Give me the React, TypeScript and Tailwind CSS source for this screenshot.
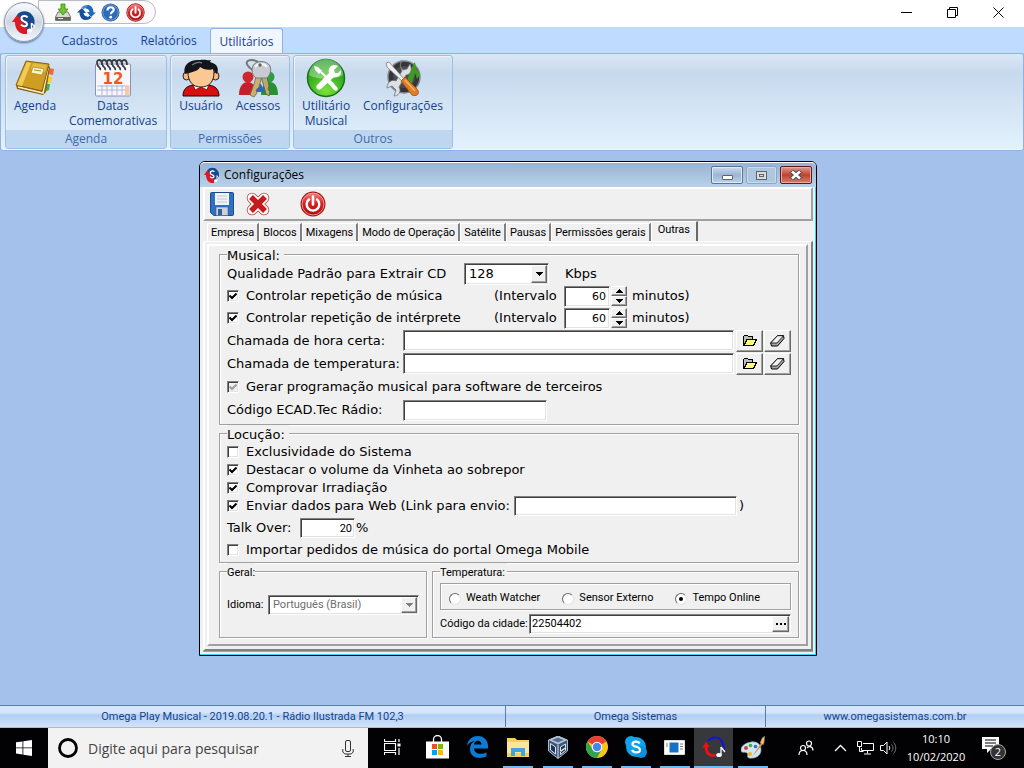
import { useState } from "react";
import type { ReactNode } from "react";

const SUNKEN = "border border-t-[#808080] border-l-[#808080] border-b-white border-r-white shadow-[inset_1px_1px_0_#404040,inset_-1px_-1px_0_#e3e3e3]";
const RAISED = "border border-t-white border-l-white border-b-[#696969] border-r-[#696969] shadow-[inset_-1px_-1px_0_#a0a0a0] bg-[#f0f0f0]";
const GROUP = "min-w-0 border border-[#a0a0a0] shadow-[1px_1px_0_#fff,inset_1px_1px_0_#fff] px-[7px]";
const SMALL = "font-[Roboto,'Liberation_Sans',sans-serif] text-[11px]";

const DIALOG_TABS = ["Empresa", "Blocos", "Mixagens", "Modo de Operação", "Satélite", "Pausas", "Permissões gerais", "Outras"];

/* ---------- Icons ---------- */

function OmegaLogo({ size }: { size: number }) {
  return (
    <svg width={size} height={size} viewBox="0 0 24 24">
      <path d="M5 5C8 0 17 0 20 5c3 3 3 7 2 11l-4 4-6 1-6-7z" fill="#164a8c" />
      <path d="M0 12l5-7 5 6 5 8v5C8 25 3 20 3 12z" fill="#dd1a22" />
      <path d="M15.500 7.500C14 5 9 5.500 9.500 9s5.500 2 5.500 5-4 3-6 .5" fill="none" stroke="#fff" strokeWidth="2" />
      <path d="M19.500 13v7" stroke="#fff" strokeWidth="1.500" />
      <path d="M19.500 13c1 2 3 2 3 4.500" fill="none" stroke="#fff" strokeWidth="1.300" />
      <ellipse cx="17.500" cy="20.500" rx="2.500" ry="2" fill="#fff" />
    </svg>
  );
}

function PowerIcon({ size }: { size: number }) {
  return (
    <svg width={size} height={size} viewBox="0 0 26 26">
      <defs>
        <linearGradient id="pw" x1="0" y1="0" x2="0" y2="1">
          <stop offset="0" stopColor="#f08080" />
          <stop offset=".5" stopColor="#d21f1f" />
          <stop offset="1" stopColor="#b00d0d" />
        </linearGradient>
      </defs>
      <circle cx="13" cy="13" r="12.500" fill="#a81010" />
      <circle cx="13" cy="13" r="11" fill="url(#pw)" stroke="#f3b5b5" strokeWidth=".8" />
      <path d="M9 8.500a6.300 6.300 0 1 0 8 0" fill="none" stroke="#fff" strokeWidth="2.400" strokeLinecap="round" />
      <path d="M13 5.500v8" stroke="#fff" strokeWidth="2.600" strokeLinecap="round" />
    </svg>
  );
}

function DownloadIcon() {
  return (
    <svg width="16" height="18" viewBox="0 0 16 18">
      <path d="M3 9h10l2.500 5v3.500H.5V14z" fill="#d9d9d4" stroke="#77776f" />
      <path d="M1 14h14v3H1z" fill="#66665c" />
      <path d="M3 15.500h5" stroke="#ddd" />
      <path d="M6 1h4v5h3l-5 6-5-6h3z" fill="#6fc52c" stroke="#3b8a12" strokeWidth=".8" />
    </svg>
  );
}

function RefreshIcon() {
  return (
    <svg width="19" height="17" viewBox="0 0 19 17">
      <path d="M0 8.500L5 4l4 5H6.500c.3 2.500 2 3.500 4 3.500L8 16c-3.500-.5-5.500-3.500-5.500-7.500z" fill="#164f9c" />
      <path d="M3.500 5C5 2 8 .5 12 1L9.500 4C8 4 7 4.500 6.500 5.500L5 3.500z" fill="#3f8ae0" />
      <path d="M19 8.500L14 13l-4-5h2.500c-.3-2.500-2-3.500-4-3.500L11 1c3.500.5 5.500 3.500 5.500 7.500z" fill="#2468b8" />
      <path d="M15.500 12c-1.500 3-4.500 4.500-8.500 4l2.500-3c1.500 0 2.500-.5 3-1.500l1.500 2z" fill="#164f9c" />
    </svg>
  );
}

function HelpIcon() {
  return (
    <svg width="19" height="19" viewBox="0 0 19 19">
      <circle cx="9.500" cy="9.500" r="9" fill="#1e4f93" />
      <circle cx="9.500" cy="9.500" r="7.800" fill="#2b6cb8" stroke="#9dc0e6" strokeWidth=".7" />
      <path d="M6.500 7.500C6.500 3 13 3.500 12.700 7c-.2 2-2.900 2-2.900 4.200" fill="none" stroke="#fff" strokeWidth="2.200" />
      <circle cx="9.700" cy="14.200" r="1.400" fill="#fff" />
    </svg>
  );
}

function AgendaIcon() {
  return (
    <svg width="40" height="38" viewBox="0 0 40 38">
      <path d="M34 9l5 1-1 6-5-1z" fill="#ee6a3a" />
      <path d="M32 17l5 1-1 6-5-1z" fill="#f4d21d" />
      <path d="M30 25l5 0-1 6-5 2z" fill="#3bb54a" />
      <path d="M1 26l1 4 26 6 3-3 4-25-3-2z" fill="#8a6209" />
      <path d="M3 28l25 6 5-25" fill="none" stroke="#f7efd2" strokeWidth="1.500" />
      <path d="M11 2l23 3-7 27L1 26z" fill="#cf9d22" stroke="#8a6209" />
      <path d="M12 3l4 1-9 23-5-1z" fill="#f0cb55" />
      <path d="M18 4l14 2-2 7-14-3z" fill="#e3ba44" />
      <path d="M18 8l11 2-2 6-11-2z" fill="#fbf3cf" stroke="#b08a20" strokeWidth=".7" />
      <path d="M19 11l7 1" stroke="#b08a20" />
    </svg>
  );
}

function CalendarIcon() {
  return (
    <svg width="38" height="38" viewBox="0 0 38 38">
      <rect x="1.500" y="5" width="35" height="32" rx="1" fill="#f7f8ff" stroke="#8d92b5" />
      <path d="M3 27h32M3 31h32M8 26v10M13 26v10M18 26v10M23 26v10M28 26v10" stroke="#aeb5dc" />
      <rect x="31" y="27" width="4.500" height="9" fill="#f5c7a4" />
      {[6, 11, 16, 21, 26, 31].map((x) => (
        <path key={x} d={`M${x} 11c1-2-1-3-2-4-2-3-1-6 1-6s3 2 3 5`} fill="none" stroke="#3c3c44" strokeWidth="1.800" />
      ))}
      <text x="19" y="25" textAnchor="middle" fontFamily="DejaVu Sans" fontWeight="700" fontSize="15" fill="#f2571c">12</text>
    </svg>
  );
}

function UserIcon() {
  return (
    <svg width="38" height="38" viewBox="0 0 38 38">
      <path d="M1 37c0-7 4-10 10-11h16c6 1 10 4 10 11z" fill="#d81010" stroke="#2a0000" />
      <path d="M11 25l2 6 6-3 6 3 2-6z" fill="#fff" stroke="#700" strokeWidth=".8" />
      <ellipse cx="4.500" cy="17" rx="3.500" ry="4" fill="#f7b981" stroke="#222" />
      <ellipse cx="33.500" cy="17" rx="3.500" ry="4" fill="#f7b981" stroke="#222" />
      <path d="M6 13c0-6 5-10 13-10s13 4 13 10c0 10-5 15-13 15S6 23 6 13z" fill="#fbc793" stroke="#222" />
      <path d="M3 15C0 6 8 0 18 1c6-1 8 1 11 0l-1 2c8 2 9 7 7 12-2-1-3-3-4-5-5 2-10 0-13-2-1 4-8 5-15 7z" fill="#12151a" />
      <path d="M10 6c4-3 8-3 10-2" stroke="#66707c" fill="none" strokeWidth="1.500" />
    </svg>
  );
}

function KeysIcon() {
  return (
    <svg width="40" height="40" viewBox="0 0 40 40">
      <circle cx="10" cy="19" r="5.500" fill="#cf2630" />
      <path d="M1 37c0-9 4-13 9-13s8 5 8 13z" fill="#c81e2b" />
      <circle cx="31" cy="19" r="5.500" fill="#2f9e38" />
      <path d="M23 37c0-9 4-13 9-13s8 5 8 13z" fill="#279233" />
      <path d="M17 26h6l4 8H14z" fill="#2c64c8" />
      <path d="M18 14C7 8 6 2 14 2c5 0 8 3 11 6" fill="none" stroke="#777" strokeWidth="2" />
      <path d="M19 15l-3 11-4 11 4 2 3-4-1-3 3-3 3-11z" fill="#c9b271" stroke="#77683c" strokeWidth=".8" />
      <path d="M22 15l6 21 3 2 1-4-2-3 1-3-3-14z" fill="#b9a878" stroke="#5c5544" strokeWidth=".8" />
      <path d="M15 8c2-6 14-6 17 0 2 6-1 10-3 12H18c-4-3-5-7-3-12z" fill="#c8ccd2" stroke="#74787e" />
      <path d="M17 9c3-4 9-4 12 0" stroke="#f5f7fa" strokeWidth="2" fill="none" />
      <circle cx="22" cy="7" r="1.700" fill="#666" />
    </svg>
  );
}

function ToolsIcon() {
  return (
    <svg width="40" height="40" viewBox="0 0 40 40">
      <defs>
        <radialGradient id="grn" cx=".5" cy=".85" r=".8">
          <stop offset="0" stopColor="#7be23a" />
          <stop offset="1" stopColor="#149414" />
        </radialGradient>
      </defs>
      <circle cx="20" cy="20" r="18.500" fill="url(#grn)" stroke="#157315" strokeWidth="1.500" />
      <path d="M3 17a17 16 0 0 1 34 0c-8 5-26 5-34 0z" fill="#fff" opacity=".35" />
      <path d="M28 27L15 14" stroke="#fff" strokeWidth="2" />
      <path d="M8 8l4 1 4 4-3 3-4-4z" fill="#fff" />
      <path d="M22 21l9 8c2 3-1 5-3 3l-8-9z" fill="#fff" />
      <path d="M25 8c4-2 6 0 7 0l-4 4 1 3 3 0 3-3c1 5-3 8-7 7L15 31c-3 2-6-1-4-4l12-12c-1-3 0-5 2-7z" fill="#fff" />
    </svg>
  );
}

function ConfigIcon() {
  return (
    <svg width="36" height="38" viewBox="0 0 36 38">
      <circle cx="19" cy="18" r="16" fill="#333538" stroke="#85878b" strokeWidth="1.500" />
      <circle cx="19" cy="18" r="11" fill="#4a4d50" />
      <path d="M23 19l5-13 2-3 1 6 4 7-3 4-2-6-3 10-5 2z" fill="#3d9b22" />
      <path d="M17 1l-2 6 3 4 4-1 3-5c3 6 0 11-4 11l-7 12c3 5-1 9-5 9l2-6-4-4-5 2c0-6 5-9 9-7l6-10c-2-5-2-8 0-11z" fill="#dde0e3" stroke="#76797c" strokeWidth=".8" />
      <path d="M1 4l3-1 16 18-2 2L2 8z" fill="#eef0f2" stroke="#7c8084" strokeWidth=".8" />
      <path d="M16 22l4-4 12 12c4 5-1 8-5 6z" fill="#e07d25" stroke="#9c4c0c" strokeWidth=".8" />
      <path d="M20 21l10 11" stroke="#f7b26d" strokeWidth="1.500" />
    </svg>
  );
}

function FloppyIcon() {
  return (
    <svg width="24" height="24" viewBox="0 0 24 24">
      <path d="M.5 1.500a1 1 0 0 1 1-1h21a1 1 0 0 1 1 1v21a1 1 0 0 1-1 1H4l-3.500-3z" fill="#2e70c2" stroke="#1a4a8f" />
      <rect x="5" y="1" width="14" height="12" fill="#f1f4f7" />
      <path d="M7 4h10M7 7h10M7 10h10" stroke="#c0c7ce" />
      <rect x="6" y="15" width="12" height="8.500" fill="#cfd3d8" stroke="#365f98" strokeWidth=".6" />
      <rect x="8" y="17" width="4" height="6" fill="#2e5fa5" />
    </svg>
  );
}

function DeleteIcon() {
  return (
    <svg width="24" height="24" viewBox="0 0 24 24">
      <path d="M6 6l12 12M18 6L6 18" stroke="#b53b3b" strokeWidth="10.500" strokeLinecap="round" />
      <path d="M6 6l12 12M18 6L6 18" stroke="#fff" strokeWidth="9" strokeLinecap="round" />
      <path d="M5 5l14 14M19 5L5 19" stroke="#c41c1c" strokeWidth="5.500" />
    </svg>
  );
}

function FolderIcon() {
  return (
    <svg width="14" height="11" viewBox="0 0 14 11" shapeRendering="crispEdges">
      <path d="M.5 10V1.500l1-1h3l1 1h4v2" fill="#bdbdbd" stroke="#000" />
      <path d="M1 10.500L4 4.500h9.500l-3 6z" fill="#ffff70" stroke="#000" />
    </svg>
  );
}

function EraserIcon() {
  return (
    <svg width="15" height="12" viewBox="0 0 15 12">
      <path d="M.7 8L7.500.7h6L14 3.500 7.500 11h-6z" fill="#a8a8a8" stroke="#000" />
      <path d="M.7 8L7.500.7h6L7 8z" fill="#f2f2f2" stroke="#000" strokeWidth=".8" />
    </svg>
  );
}

function Triangle({ up = false, fill = "#000", size = 7 }: { up?: boolean; fill?: string; size?: number }) {
  return (
    <svg width={size} height="4" viewBox="0 0 7 4" shapeRendering="crispEdges">
      <path d={up ? "M0 4L3.500 0 7 4z" : "M0 0h7L3.500 4z"} fill={fill} />
    </svg>
  );
}

/* ---------- Form parts ---------- */

function CheckRow({ label, checked = false, disabled = false }: { label: string; checked?: boolean; disabled?: boolean }) {
  return (
    <label className="flex items-center gap-[7px] whitespace-nowrap">
      <span className="relative block h-3 w-3 shrink-0">
        <input
          type="checkbox"
          defaultChecked={checked}
          disabled={disabled}
          className={`peer block h-3 w-3 appearance-none bg-white disabled:bg-[#f0f0f0] ${SUNKEN}`}
        />
        <svg className="pointer-events-none absolute left-0.5 top-0.5 hidden peer-checked:block" width="8" height="8" viewBox="0 0 8 8">
          <path d="M.5 3.500L3 6 7.500 1.500" fill="none" stroke={disabled ? "#a0a0a0" : "#000"} strokeWidth="2" />
        </svg>
      </span>
      {label}
    </label>
  );
}

function RepeatRow({ label, id }: { label: string; id: string }) {
  const [value, setValue] = useState(60);
  return (
    <div className="flex h-[22px] items-center">
      <div className="w-[267px]">
        <CheckRow label={label} checked />
      </div>
      <label htmlFor={id} className="w-[70px]">(Intervalo</label>
      <input
        id={id}
        value={value}
        onChange={(e) => setValue(Number(e.target.value) || 0)}
        className={`h-[21px] w-[46px] bg-white pr-[3px] text-right text-[11px] ${SUNKEN}`}
      />
      <span className="ml-px mr-[5px] flex w-4 flex-col">
        <button type="button" aria-label="Aumentar" onClick={() => setValue(value + 1)} className={`flex h-[10px] items-center justify-center ${RAISED}`}>
          <Triangle up />
        </button>
        <button type="button" aria-label="Diminuir" onClick={() => setValue(value - 1)} className={`flex h-[10px] items-center justify-center ${RAISED}`}>
          <Triangle />
        </button>
      </span>
      <span>minutos)</span>
    </div>
  );
}

function FileRow({ label, id }: { label: string; id: string }) {
  return (
    <div className="flex h-[23px] items-center">
      <label htmlFor={id} className="w-[176px] shrink-0 whitespace-nowrap">{label}</label>
      <input id={id} className={`h-[21px] min-w-0 flex-1 bg-white px-1 ${SUNKEN}`} />
      <button type="button" aria-label="Abrir" className={`ml-0.5 flex h-[22px] w-[27px] items-center justify-center ${RAISED}`}>
        <FolderIcon />
      </button>
      <button type="button" aria-label="Limpar" className={`ml-px flex h-[22px] w-[27px] items-center justify-center ${RAISED}`}>
        <EraserIcon />
      </button>
    </div>
  );
}

function RadioOption({ label, checked = false }: { label: string; checked?: boolean }) {
  return (
    <label className="flex items-center gap-[5px] whitespace-nowrap">
      <span className="relative block h-3 w-3">
        <input
          type="radio"
          name="temperatura"
          defaultChecked={checked}
          className="peer block h-3 w-3 appearance-none rounded-full border border-b-[#e3e3e3] border-l-[#696969] border-r-[#e3e3e3] border-t-[#696969] bg-white"
        />
        <span className="pointer-events-none absolute left-1 top-1 hidden h-1 w-1 rounded-full bg-black peer-checked:block" />
      </span>
      {label}
    </label>
  );
}

/* ---------- Ribbon ---------- */

function RibbonGroup({ title, children }: { title: string; children: ReactNode }) {
  return (
    <section className="flex h-[94px] flex-col overflow-hidden rounded-[3px] border border-[#9dbfe3] shadow-[inset_1px_1px_0_#eaf3fd]">
      <div className="flex flex-1 px-0.5 pt-0.5">{children}</div>
      <h2 className="h-[18px] bg-[#bfd6f1] text-center leading-[18px] text-[#3e6aaa]">{title}</h2>
    </section>
  );
}

function RibbonButton({ icon, label, className }: { icon: ReactNode; label: string; className: string }) {
  return (
    <button type="button" className={`flex flex-col items-center leading-[15px] text-[#15428b] ${className}`}>
      <span className="flex h-10 items-center">{icon}</span>
      <span>{label}</span>
    </button>
  );
}

function Ribbon() {
  return (
    <header className="relative font-['Open_Sans','Noto_Sans',sans-serif] text-[12px]">
      <div className="flex h-[27px] items-start justify-between bg-white">
        <div className="ml-[38px] flex h-6 items-center gap-[5px] rounded-r-full border border-[#b9bcc2] bg-[#fafafa] pl-4 pr-2.5">
          <button type="button" aria-label="Baixar"><DownloadIcon /></button>
          <button type="button" aria-label="Atualizar" className="ml-px"><RefreshIcon /></button>
          <button type="button" aria-label="Ajuda"><HelpIcon /></button>
          <button type="button" aria-label="Sair" className="ml-px"><PowerIcon size={19} /></button>
        </div>
        <div className="flex h-6 items-center gap-[35px] pr-5">
          <button type="button" aria-label="Minimizar">
            <svg width="11" height="11" viewBox="0 0 11 11"><path d="M0 5.500h11" stroke="#000" /></svg>
          </button>
          <button type="button" aria-label="Restaurar">
            <svg width="11" height="11" viewBox="0 0 11 11"><path d="M.5 2.500h8v8h-8zM2.500 2.500v-2h8v8h-2" fill="none" stroke="#000" /></svg>
          </button>
          <button type="button" aria-label="Fechar">
            <svg width="11" height="11" viewBox="0 0 11 11"><path d="M.5.5l10 10M10.500.5l-10 10" stroke="#000" /></svg>
          </button>
        </div>
      </div>
      <nav className="flex h-[26px] items-end bg-[#bfdbff] pl-[50px] text-[#15428b]">
        <button type="button" className="h-6 w-[79px]">Cadastros</button>
        <button type="button" className="h-6 w-[79px]">Relatórios</button>
        <button type="button" className="ml-0.5 h-[25px] w-[73px] rounded-t-[3px] border border-b-0 border-[#8db2e3] bg-[#f0f6fe] pt-px">Utilitários</button>
      </nav>
      <div className="flex h-[98px] gap-[3px] rounded-[3px] border border-[#8db2e3] bg-linear-to-b from-[#dbe7f5] from-0% via-[#c7d9ed] via-20% to-[#e3f2fd] px-1 pt-px shadow-[inset_0_-1px_0_#e8fbff]">
        <RibbonGroup title="Agenda">
          <RibbonButton icon={<AgendaIcon />} label="Agenda" className="w-[54px]" />
          <RibbonButton icon={<CalendarIcon />} label="Datas Comemorativas" className="w-[102px]" />
        </RibbonGroup>
        <RibbonGroup title="Permissões">
          <RibbonButton icon={<UserIcon />} label="Usuário" className="w-14" />
          <RibbonButton icon={<KeysIcon />} label="Acessos" className="w-[58px]" />
        </RibbonGroup>
        <RibbonGroup title="Outros">
          <RibbonButton icon={<ToolsIcon />} label="Utilitário Musical" className="w-[60px]" />
          <RibbonButton icon={<ConfigIcon />} label="Configurações" className="w-[94px]" />
        </RibbonGroup>
      </div>
      <button
        type="button"
        aria-label="Menu principal"
        className="absolute left-1 top-0.5 flex h-10 w-10 items-center justify-center rounded-full border border-[#8b98ab] bg-linear-to-b from-[#fdfdfe] via-[#ccd5e2] to-[#f4f8fd] shadow-[inset_0_0_0_1px_#eef2f8,0_1px_2px_#5b6b82]"
      >
        <OmegaLogo size={24} />
      </button>
    </header>
  );
}

/* ---------- Dialog ---------- */

function MusicalGroup() {
  return (
    <fieldset className={`pb-[3px] ${GROUP}`}>
      <legend className="bg-[#f0f0f0] pr-1 pt-1 leading-3">Musical:</legend>
      <div className="flex h-[23px] items-center">
        <label htmlFor="qualidade" className="w-[237px]">Qualidade Padrão para Extrair CD</label>
        <span className="relative mr-4 block">
          <select id="qualidade" defaultValue="128" className={`block h-[22px] w-[85px] appearance-none bg-white pl-1 ${SUNKEN}`}>
            <option>64</option>
            <option>128</option>
            <option>192</option>
          </select>
          <span className={`pointer-events-none absolute right-0.5 top-0.5 flex h-[18px] w-4 items-center justify-center ${RAISED}`}>
            <Triangle />
          </span>
        </span>
        <span>Kbps</span>
      </div>
      <RepeatRow id="musica" label="Controlar repetição de música" />
      <RepeatRow id="interprete" label="Controlar repetição de intérprete" />
      <FileRow id="hora" label="Chamada de hora certa:" />
      <FileRow id="temp" label="Chamada de temperatura:" />
      <div className="flex h-6 items-center">
        <CheckRow label="Gerar programação musical para software de terceiros" checked disabled />
      </div>
      <div className="flex h-[22px] items-center">
        <label htmlFor="ecad" className="w-[176px]">Código ECAD.Tec Rádio:</label>
        <input id="ecad" autoFocus className={`h-[21px] w-[144px] bg-white px-px outline-none ${SUNKEN}`} />
      </div>
    </fieldset>
  );
}

function LocucaoGroup() {
  return (
    <fieldset className={`pb-[3px] ${GROUP}`}>
      <legend className="bg-[#f0f0f0] pr-1 pt-1 leading-3">Locução:</legend>
      <div className="flex h-5 items-center pt-0.5"><CheckRow label="Exclusividade do Sistema" /></div>
      <div className="flex h-[18px] items-center"><CheckRow label="Destacar o volume da Vinheta ao sobrepor" checked /></div>
      <div className="flex h-[18px] items-center"><CheckRow label="Comprovar Irradiação" checked /></div>
      <div className="flex h-[18px] items-center">
        <CheckRow label="Enviar dados para Web" checked />
        <label htmlFor="link" className="ml-1 mr-1 whitespace-nowrap">(Link para envio:</label>
        <input id="link" className={`h-5 w-[223px] bg-white px-1 ${SUNKEN}`} />
        <span className="ml-0.5">)</span>
      </div>
      <div className="flex h-[26px] items-center">
        <label htmlFor="talk" className="w-[73px]">Talk Over:</label>
        <input id="talk" defaultValue="20" className={`h-5 w-[55px] bg-white pr-0.5 text-right ${SMALL} ${SUNKEN}`} />
        <span className="ml-px">%</span>
      </div>
      <div className="flex h-[18px] items-center"><CheckRow label="Importar pedidos de música do portal Omega Mobile" /></div>
    </fieldset>
  );
}

function BottomGroups() {
  return (
    <div className={`flex gap-[5px] ${SMALL}`}>
      <fieldset className={`w-[208px] ${GROUP}`}>
        <legend className="bg-[#f0f0f0] pt-1 leading-3">Geral:</legend>
        <div className="flex h-[52px] items-center">
          <label htmlFor="idioma" className="w-[41px]">Idioma:</label>
          <span className="relative block">
            <select id="idioma" disabled className={`block h-5 w-[151px] appearance-none bg-white pl-1 text-[#6d6d6d] opacity-100 ${SUNKEN}`}>
              <option>Português (Brasil)</option>
            </select>
            <span className={`pointer-events-none absolute right-0.5 top-0.5 flex h-4 w-4 items-center justify-center ${RAISED}`}>
              <Triangle fill="#808080" />
            </span>
          </span>
        </div>
      </fieldset>
      <fieldset className={`flex-1 pb-[3px] ${GROUP}`}>
        <legend className="bg-[#f0f0f0] pr-0.5 pt-1 leading-3">Temperatura:</legend>
        <div role="radiogroup" aria-label="Temperatura" className="mt-1 flex h-[27px] items-center gap-[22px] border border-[#a0a0a0] pl-2 pt-1 shadow-[1px_1px_0_#fff,inset_1px_1px_0_#fff]">
          <RadioOption label="Weath Watcher" />
          <RadioOption label="Sensor Externo" />
          <RadioOption label="Tempo Online" checked />
        </div>
        <div className="mt-1 flex h-5 items-center">
          <label htmlFor="cidade" className="w-[89px]">Código da cidade:</label>
          <div className={`flex h-5 flex-1 bg-white p-px ${SUNKEN}`}>
            <input id="cidade" defaultValue="22504402" className="min-w-0 flex-1 px-px outline-none" />
            <button type="button" aria-label="Procurar" className={`flex w-[17px] items-center justify-center gap-0.5 ${RAISED}`}>
              <i className="h-0.5 w-0.5 bg-black" />
              <i className="h-0.5 w-0.5 bg-black" />
              <i className="h-0.5 w-0.5 bg-black" />
            </button>
          </div>
        </div>
      </fieldset>
    </div>
  );
}

function ConfigDialog() {
  const caption = "flex h-[18px] items-center justify-center rounded-[2px] border";
  return (
    <section className="ml-[199px] mt-[10px] w-[618px] rounded-t-[6px] border border-black bg-[#f0f0f0] pb-px shadow-[inset_-1px_-1px_0_#33d6f0]">
      <div className="flex h-[25px] items-center rounded-t-[5px] border-t border-white bg-linear-to-b from-[#99b4d1] to-[#b9d1ea] pl-1 pr-1 font-['Open_Sans','Noto_Sans',sans-serif] text-[12px]">
        <OmegaLogo size={16} />
        <h1 className="ml-1 flex-1">Configurações</h1>
        <div className="flex gap-[3px]">
          <button type="button" aria-label="Minimizar" className={`${caption} w-8 border-[#5d7590] bg-linear-to-b from-[#c9dcf0] via-[#9bb5d3] to-[#bcd3ec] shadow-[inset_0_0_0_1px_#dfeaf6]`}>
            <span className="mt-1 h-[5px] w-[11px] rounded-[1px] border border-[#5a6370] bg-white" />
          </button>
          <button type="button" aria-label="Maximizar" className={`${caption} w-[31px] border-[#8fa7c3] bg-[#aec6e0] shadow-[inset_0_0_0_1px_#c9daec]`}>
            <span className="flex h-[9px] w-[11px] items-center justify-center border border-[#5a6370] bg-[#dcdcdc]">
              <i className="h-[3px] w-[5px] border border-[#5a6370]" />
            </span>
          </button>
          <button type="button" aria-label="Fechar" className={`${caption} w-8 border-[#5a1a20] bg-linear-to-b from-[#dc9a90] via-[#c0402d] to-[#d67f68] shadow-[inset_0_0_0_1px_#e8aca2]`}>
            <svg width="12" height="10" viewBox="0 0 12 10">
              <path d="M1.500 1l9 8M10.500 1l-9 8" stroke="#4b5060" strokeWidth="4.500" />
              <path d="M2 1.500l8 7M10 1.500l-8 7" stroke="#fff" strokeWidth="2.500" />
            </svg>
          </button>
        </div>
      </div>
      <div className="mx-[3px] mb-0.5 border-b border-[#a0a0a0]">
        <div className="flex h-[34px] items-center border-2 border-b-[#a0a0a0] border-l-white border-r-[#a0a0a0] border-t-white pl-[5px]">
          <button type="button" aria-label="Salvar"><FloppyIcon /></button>
          <button type="button" aria-label="Cancelar" className="ml-3"><DeleteIcon /></button>
          <button type="button" aria-label="Sair" className="ml-[30px]"><PowerIcon size={26} /></button>
        </div>
        <div role="tablist" className={`flex h-5 items-end pl-1 ${SMALL}`}>
          {DIALOG_TABS.map((tab) => (
            <button
              key={tab}
              type="button"
              role="tab"
              aria-selected={tab === "Outras"}
              className={
                tab === "Outras"
                  ? "h-5 border-l border-t border-l-white border-t-white border-r-2 border-r-[#696969] px-1.5 pb-0.5"
                  : "h-[18px] border-l border-t border-l-white border-t-white border-r-2 border-r-[#808080] px-[3px] pt-px"
              }
            >
              {tab}
            </button>
          ))}
        </div>
        <div className="border-b-2 border-l-2 border-r-2 border-t border-b-[#808080] border-l-white border-r-[#808080] border-t-white pb-[3px] pl-0.5 pr-[3px] pt-0.5">
          <div className="border-2 border-b-[#a0a0a0] border-l-white border-r-[#a0a0a0] border-t-white pb-1.5 pl-2.5 pr-[7px] font-['DejaVu_Sans',Verdana,sans-serif] text-[13px]">
            <MusicalGroup />
            <LocucaoGroup />
            <BottomGroups />
          </div>
        </div>
      </div>
    </section>
  );
}

/* ---------- Taskbar ---------- */

function TaskButton({ label, children, open = false, active = false, className = "w-[39px]" }: { label: string; children: ReactNode; open?: boolean; active?: boolean; className?: string }) {
  return (
    <button type="button" aria-label={label} className={`flex flex-col items-center ${className} ${active ? "bg-[#37383b]" : ""}`}>
      <span className="flex flex-1 items-center">{children}</span>
      <span className={`h-0.5 ${active ? "w-full" : "w-[30px]"} ${open ? "bg-[#76b9ed]" : ""}`} />
    </button>
  );
}

function Taskbar() {
  return (
    <footer className="flex h-10 bg-[#020204] font-['Open_Sans','Noto_Sans',sans-serif] text-white">
      <button type="button" aria-label="Iniciar" className="flex w-12 items-center justify-center">
        <svg width="16" height="16" viewBox="0 0 16 16">
          <path d="M0 2.300l6.500-.9v6.100H0zM7.300 1.300L16 0v7.500H7.300zM0 8.300h6.500v6.200L0 13.600zM7.300 8.300H16V16l-8.700-1.300z" fill="#fff" />
        </svg>
      </button>
      <label className="flex w-80 items-center bg-[#f2f2f2] px-2.5">
        <svg width="20" height="20" viewBox="0 0 20 20"><circle cx="10" cy="10" r="8.500" fill="none" stroke="#000" strokeWidth="2.800" /></svg>
        <input
          type="search"
          aria-label="Pesquisar"
          placeholder="Digite aqui para pesquisar"
          className="ml-2.5 min-w-0 flex-1 text-[14px] placeholder:text-[#444]"
        />
        <svg width="12" height="17" viewBox="0 0 12 17" className="mr-1">
          <rect x="3.500" y=".5" width="5" height="11" rx="1.500" fill="none" stroke="#333" />
          <path d="M.8 9v3l2 2h6.400l2-2V9M6 14v3M3 16.500h6" fill="none" stroke="#333" />
        </svg>
      </label>
      <TaskButton label="Visão de tarefas" className="mr-px w-12">
        <svg width="17" height="16" viewBox="0 0 17 16">
          <path d="M.5 0v2.500h11V0M.5 16v-2.500h11V16M.5 4.500h11v7H.5zM15 0v3M15 9v7" fill="none" stroke="#fff" strokeWidth="1.200" />
          <path d="M13.500 4.500h3v3h-3z" fill="#fff" />
        </svg>
      </TaskButton>
      <TaskButton label="Loja" className="w-10">
        <svg width="23" height="24" viewBox="0 0 23 24">
          <path d="M7.500 7V4.500a4 4 0 0 1 8 0V7" fill="none" stroke="#fff" strokeWidth="1.300" />
          <path d="M0 6.500h23v17H0z" fill="#fff" />
          <path d="M6 9h5v5H6z" fill="#f25022" /><path d="M12 9h5v5h-5z" fill="#7fba00" />
          <path d="M6 15h5v5H6z" fill="#00a4ef" /><path d="M12 15h5v5h-5z" fill="#ffb900" />
        </svg>
      </TaskButton>
      <TaskButton label="Edge" className="w-[41px]">
        <svg width="21" height="22" viewBox="0 0 21 22">
          <path d="M0 10C1 3 5.500 0 11 0c6 0 10 4.500 10 10v2.500H7c.3 6 8 6.500 12.500 3.800v4C12 24 3 21.500 3 13c0-4 2-6.500 5-8C4.500 5.500 1.500 7 0 10zm7-1.500h7.500C14.500 3.500 7.500 3.500 7 8.500z" fill="#0d7bd4" />
        </svg>
      </TaskButton>
      <TaskButton label="Explorador" open className="w-10">
        <svg width="22" height="20" viewBox="0 0 22 20">
          <path d="M0 1h8l2 2h12v17H0z" fill="#f6cf5c" />
          <path d="M0 5h22v11H0z" fill="#fde69a" />
          <path d="M4 11h14v8h-4v-4H8v4H4z" fill="#3fa5e0" />
        </svg>
      </TaskButton>
      <TaskButton label="VirtualBox" open>
        <svg width="20" height="23" viewBox="0 0 20 23">
          <path d="M10 0l9.500 4v11L10 22.500.5 15V4z" fill="#3b5677" stroke="#a8bbd0" />
          <path d="M10 0l9.500 4L10 8.500.5 4z" fill="#b8c8da" />
          <path d="M4 4l6-2.500L16 4l-6 2.500z" fill="#566f90" />
          <path d="M10 8.500V22.500" stroke="#d7e1ec" />
          <path d="M2.500 7.500v6.500l5 4v-7zM12.500 11l5-3v3.500l-5 3.500zM12.500 16l5-4v2.500l-5 4z" fill="#22344e" stroke="#dce5ef" strokeWidth="1" />
        </svg>
      </TaskButton>
      <TaskButton label="Chrome" open>
        <svg width="22" height="22" viewBox="0 0 22 22">
          <circle cx="11" cy="11" r="11" fill="#f8c51c" />
          <path d="M11 11L1.500 5.500A11 11 0 0 1 20.500 5.500z" fill="#e34133" />
          <path d="M1.500 5.500A11 11 0 0 0 11 22l4.500-8.500L7 14z" fill="#30a350" />
          <path d="M11 5.500h9.500" stroke="#e34133" />
          <circle cx="11" cy="11" r="5.200" fill="#fff" /><circle cx="11" cy="11" r="4.200" fill="#4285f4" />
        </svg>
      </TaskButton>
      <TaskButton label="Skype" open>
        <svg width="22" height="22" viewBox="0 0 22 22">
          <circle cx="11" cy="11" r="10" fill="#10a4ea" /><circle cx="6" cy="6" r="6" fill="#10a4ea" /><circle cx="16" cy="16" r="6" fill="#0b92dc" />
          <path d="M14.500 7.500c-1-2.500-7-2.500-7 .7s7.500 2 7.500 5.500-6.500 3.600-8 .3" fill="none" stroke="#fff" strokeWidth="2.200" />
        </svg>
      </TaskButton>
      <TaskButton label="Aplicativo" open>
        <svg width="21" height="15" viewBox="0 0 21 15">
          <path d="M.5.5h20v14H.5z" fill="#fff" stroke="#ddd" />
          <path d="M5.500 2.500h9v10h-9z" fill="#1672c7" />
          <path d="M2 4h2M2 6h2M16 4h3M16 6.500h3M16 9h3" stroke="#777" />
        </svg>
      </TaskButton>
      <TaskButton label="Omega Play" open active>
        <svg width="24" height="22" viewBox="0 0 24 22">
          <path d="M6 5c4-5 13-5 15 3l1 6" fill="none" stroke="#1010e8" strokeWidth="2" />
          <path d="M0 12l4-6 4 5H5.500c0 6 4 8 8 7v2.500C7 22 2.500 18 2.500 11z" fill="#f01010" />
          <path d="M19 11v8M19 11l4 5" stroke="#fff" strokeWidth="1.300" /><ellipse cx="17" cy="19" rx="2.800" ry="2" fill="#fff" />
        </svg>
      </TaskButton>
      <TaskButton label="Paint" open>
        <svg width="24" height="23" viewBox="0 0 24 23">
          <path d="M10 6c7-1 10 3 10 8 0 6-6 9-12 8-3-1 0-3-2-5S0 18 0 14s4-7 10-8z" fill="#cfe6f5" stroke="#7fa6c4" strokeWidth=".7" />
          <circle cx="5" cy="12" r="2" fill="#e23b2e" /><circle cx="9.500" cy="9.500" r="1.800" fill="#4aa83c" /><circle cx="14.500" cy="10.500" r="1.800" fill="#2f6fd0" /><circle cx="9" cy="18" r="2" fill="#f3b21f" />
          <path d="M11 21l9-14 2 1z" fill="#d98d35" /><path d="M19 7l2-5 3-2-1 7-1 2z" fill="#e6c08c" stroke="#8a5a20" strokeWidth=".6" />
        </svg>
      </TaskButton>
      <div className="ml-auto flex items-center">
        <svg width="16" height="16" viewBox="0 0 16 16" fill="none" stroke="#fff" strokeWidth="1.200">
          <circle cx="5" cy="8" r="2.500" /><path d="M1 15c0-6 8-6 8 0" /><circle cx="11" cy="3.500" r="2.500" /><path d="M9 8c2-2.500 6-1.500 6 2.500" />
        </svg>
        <svg width="13" height="8" viewBox="0 0 13 8" className="ml-5"><path d="M1 7l5.500-5.500L12 7" fill="none" stroke="#fff" strokeWidth="1.300" /></svg>
        <svg width="17" height="14" viewBox="0 0 17 14" className="ml-2.5" fill="none" stroke="#fff">
          <path d="M6 2.500h10.500v7H4.500V7M.5.5h4v5h-4zM2.500 5.500v5h4M10.500 9.500v3M7 13h7" />
        </svg>
        <svg width="17" height="14" viewBox="0 0 17 14" className="ml-1.5" fill="none" stroke="#fff">
          <path d="M.5 4.500h3L7 1v12L3.500 9.500h-3zM9 5c1 1.500 1 2.500 0 4" /><path d="M11.500 3.500c2 2 2 5 0 7M13.500 1.500c3 3 3 8 0 11" stroke="#777" />
        </svg>
        <div className="ml-[5px] w-[68px] text-center text-[11px] leading-[18px]">
          <div>10:10</div>
          <div>10/02/2020</div>
        </div>
        <div className="relative ml-3 mr-[18px] h-6 w-6">
          <svg width="17" height="17" viewBox="0 0 17 17"><path d="M0 1h17v12H9l-4 4v-4H0z" fill="#fff" /><path d="M3 4h11M3 7h11M3 10h8" stroke="#000" /></svg>
          <span className="absolute bottom-0 right-0 h-4 w-4 rounded-full border border-[#aaa] bg-[#333] text-center text-[11px] leading-[14px]">2</span>
        </div>
      </div>
    </footer>
  );
}

export default function App() {
  return (
    <div className="flex min-h-screen flex-col bg-[#a3c1ea] text-black">
      <Ribbon />
      <main className="flex-1">
        <ConfigDialog />
      </main>
      <div className={`grid h-[23px] grid-cols-[506fr_260fr_258fr] border-b border-t border-b-[#b8b8b8] border-t-[#567db0] bg-linear-to-b from-[#d7e6f9] from-30% via-[#b2cff3] via-45% to-[#d2e3fa] text-center leading-[21px] text-[#15428b] ${SMALL}`}>
        <div className="border-r border-[#567db0]">Omega Play Musical - 2019.08.20.1 - Rádio Ilustrada FM 102,3</div>
        <div className="border-r border-[#567db0]">Omega Sistemas</div>
        <a href="#site">www.omegasistemas.com.br</a>
      </div>
      <Taskbar />
    </div>
  );
}
